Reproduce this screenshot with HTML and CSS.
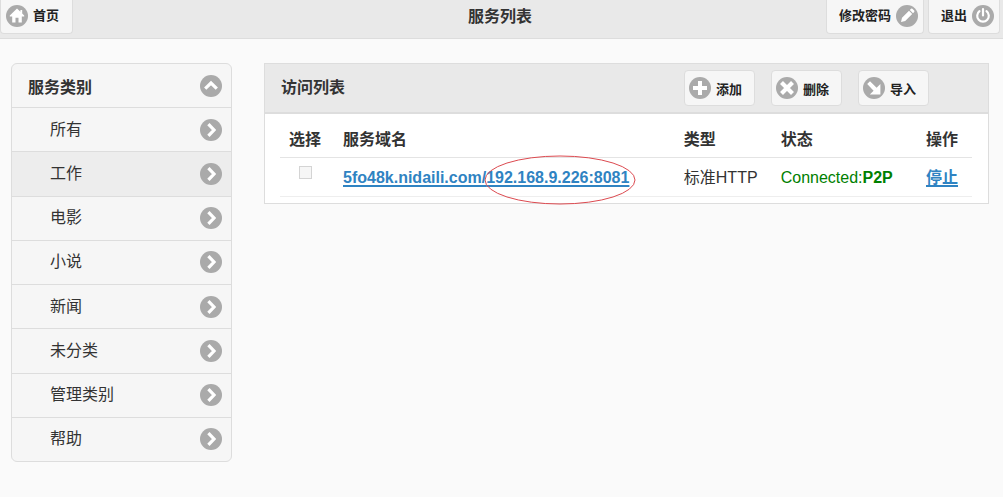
FILE: index.html
```html
<!DOCTYPE html>
<html lang="zh-CN">
<head>
  <meta charset="UTF-8">
  <meta name="viewport" content="width=device-width, initial-scale=1.0">
  <title>服务列表</title>
  <link rel="stylesheet" href="styles.css">
</head>
<body>

  <!-- Shared icons -->
  <svg class="icon-defs" aria-hidden="true">
    <symbol id="icon-home" viewBox="0 0 22 22">
      <path d="M11 3.6 3.8 10.6v1h2.4v5.8h3.3v-4.6h3v4.6h3.3v-5.8h2.4v-1l-2-2V5h-1.8v1.8z" fill="#fff"/>
    </symbol>
    <symbol id="icon-edit" viewBox="0 0 22 22">
      <path d="M5 17l1-4.2 7-7 3.2 3.2-7 7zM13.8 5l1.2-1.2q.7-.5 1.4 0l1.8 1.8q.5.7 0 1.4L17 8.2z" fill="#fff"/>
    </symbol>
    <symbol id="icon-power" viewBox="0 0 22 22">
      <path d="M7.5 6.2a5.8 5.8 0 1 0 7 0M11 4v6.5" fill="none" stroke="#fff" stroke-width="2.2" stroke-linecap="round"/>
    </symbol>
    <symbol id="icon-up" viewBox="0 0 22 22">
      <path d="M5.2 13.6 11 8l5.8 5.6" fill="none" stroke="#fff" stroke-width="3.2"/>
    </symbol>
    <symbol id="icon-right" viewBox="0 0 22 22">
      <path d="M8.4 5.2 14 11l-5.6 5.8" fill="none" stroke="#fff" stroke-width="3.2"/>
    </symbol>
    <symbol id="icon-plus" viewBox="0 0 22 22">
      <path d="M11 4v14M4 11h14" fill="none" stroke="#fff" stroke-width="4"/>
    </symbol>
    <symbol id="icon-delete" viewBox="0 0 22 22">
      <path d="M5.5 5.5l11 11M16.5 5.5l-11 11" fill="none" stroke="#fff" stroke-width="4.2"/>
    </symbol>
    <symbol id="icon-import" viewBox="0 0 22 22">
      <path d="M4.2 7 7 4.2l6.6 6.5L17.4 7v10.6H6.8l3.8-3.9z" fill="#fff"/>
    </symbol>
  </svg>

  <header class="header">
    <div class="header-side">
      <a class="btn btn-header" href="#"><svg class="icon"><use href="#icon-home"/></svg>首页</a>
    </div>
    <h1 class="title">服务列表</h1>
    <div class="header-side header-right">
      <a class="btn btn-header" href="#">修改密码<svg class="icon"><use href="#icon-edit"/></svg></a>
      <a class="btn btn-header" href="#">退出<svg class="icon"><use href="#icon-power"/></svg></a>
    </div>
  </header>

  <div class="content">
    <nav class="sidebar">
      <button type="button" class="sidebar-heading">服务类别<svg class="icon"><use href="#icon-up"/></svg></button>
      <ul class="category-list">
        <li><a href="#">所有<svg class="icon"><use href="#icon-right"/></svg></a></li>
        <li><a href="#" class="active">工作<svg class="icon"><use href="#icon-right"/></svg></a></li>
        <li><a href="#">电影<svg class="icon"><use href="#icon-right"/></svg></a></li>
        <li><a href="#">小说<svg class="icon"><use href="#icon-right"/></svg></a></li>
        <li><a href="#">新闻<svg class="icon"><use href="#icon-right"/></svg></a></li>
        <li><a href="#">未分类<svg class="icon"><use href="#icon-right"/></svg></a></li>
        <li><a href="#">管理类别<svg class="icon"><use href="#icon-right"/></svg></a></li>
        <li><a href="#">帮助<svg class="icon"><use href="#icon-right"/></svg></a></li>
      </ul>
    </nav>

    <main class="panel">
      <div class="panel-header">
        <h2>访问列表</h2>
        <div class="toolbar">
          <button type="button" class="btn"><svg class="icon"><use href="#icon-plus"/></svg>添加</button>
          <button type="button" class="btn"><svg class="icon"><use href="#icon-delete"/></svg>删除</button>
          <button type="button" class="btn"><svg class="icon"><use href="#icon-import"/></svg>导入</button>
        </div>
      </div>

      <div class="panel-body">
        <table class="service-table">
          <thead>
            <tr>
              <th class="col-select">选择</th>
              <th class="col-domain">服务域名</th>
              <th class="col-type">类型</th>
              <th class="col-status">状态</th>
              <th class="col-action">操作</th>
            </tr>
          </thead>
          <tbody>
            <tr>
              <td class="col-select"><input type="checkbox" class="check" id="service1" aria-labelledby="serviceName1"></td>
              <td><a class="domain" id="serviceName1" href="#">5fo48k.nidaili.com/<span class="marked">192.168.9.226:8081<svg class="mark" viewBox="0 0 152 50" aria-hidden="true"><ellipse cx="76" cy="25" rx="75" ry="24"/></svg></span></a></td>
              <td>标准HTTP</td>
              <td class="status">Connected:<b>P2P</b></td>
              <td><a class="stop" href="#">停止</a></td>
            </tr>
          </tbody>
        </table>
      </div>
    </main>
  </div>

</body>
</html>
```
FILE: styles.css
```css
* {
  box-sizing: border-box;
}
body {
  margin: 0;
  background-color: #fafafa;
  color: #333;
  font-family: "Liberation Sans", "Noto Sans CJK SC", sans-serif;
  font-size: 16px;
  line-height: 20px;
}
a {
  color: #333;
  text-decoration: none;
}
.icon-defs {
  display: none;
}
.icon {
  flex: none;
  width: 22px;
  height: 22px;
  border-radius: 50%;
  background-color: #aaa;
}

/* Buttons */
.btn {
  display: flex;
  align-items: center;
  gap: 5px;
  height: 36px;
  padding: 0 12px 0 4px;
  border: 1px solid #ddd;
  border-radius: 4px;
  background-color: #f6f6f6;
  color: #222;
  font-family: inherit;
  font-size: 13px;
  font-weight: bold;
  white-space: nowrap;
  cursor: pointer;
}
.btn-header {
  height: 34px;
  padding: 0 13px 2px 5px;
  border-top: none;
  border-radius: 0 0 4px 4px;
}
.header-right .btn-header {
  padding: 0 5px 2px 12px;
}

/* Header */
.header {
  display: flex;
  align-items: flex-start;
  height: 39px;
  padding-right: 3px;
  border-bottom: 1px solid #ddd;
  background-color: #e9e9e9;
}
.header-side {
  display: flex;
  flex: 1;
  gap: 4px;
}
.header-right {
  justify-content: flex-end;
}
.title {
  margin: 0;
  font-size: 16px;
  line-height: 34px;
}

.content {
  display: flex;
  align-items: flex-start;
  gap: 32px;
  padding: 24px 14px 24px 11px;
}

/* Sidebar */
.sidebar {
  flex: none;
  width: 22%;
  min-width: 221px;
  border: 1px solid #ddd;
  border-radius: 6px;
  overflow: hidden;
  background-color: #f6f6f6;
}
.sidebar-heading {
  display: flex;
  align-items: center;
  justify-content: space-between;
  width: 100%;
  height: 43px;
  padding: 0 9px 0 16px;
  border: none;
  background: none;
  color: #333;
  font-family: inherit;
  font-size: 16px;
  font-weight: bold;
}
.category-list {
  display: grid;
  grid-auto-rows: 1fr;
  min-height: 354px;
  margin: 0;
  padding: 0;
  list-style: none;
}
.category-list a {
  display: flex;
  align-items: center;
  justify-content: space-between;
  height: 100%;
  padding: 0 9px 0 38px;
  border-top: 1px solid #ddd;
  line-height: 22px;
}
.category-list .active {
  background-color: #ededed;
}

/* Panel */
.panel {
  flex: 1;
  min-width: 0;
  border: 1px solid #ddd;
  background-color: #fff;
}
.panel-header {
  display: flex;
  align-items: center;
  justify-content: space-between;
  height: 50px;
  padding: 0 59px 0 16px;
  border-bottom: 2px solid #ddd;
  background-color: #e9e9e9;
}
.panel-header h2 {
  margin: 0;
  font-size: 16px;
  line-height: 22px;
}
.toolbar {
  display: flex;
  gap: 16px;
}
.panel-body {
  padding: 7px 16px 6px 15px;
}

/* Table */
.service-table {
  width: 100%;
  border-collapse: collapse;
  table-layout: fixed;
}
.service-table th,
.service-table td {
  padding: 9px 0 7px 13px;
  border-bottom: 1px solid #e4e4e4;
  text-align: left;
  white-space: nowrap;
}
.service-table td {
  padding: 10px 0 8px 13px;
  border-bottom-color: #eee;
}
.service-table .col-select {
  width: 50px;
  padding-left: 0;
  text-align: center;
}
.service-table td.col-select {
  padding-top: 8px;
  vertical-align: top;
}
.col-type {
  width: 14%;
}
.col-status {
  width: 21%;
}
.col-action {
  width: 59px;
}
.check {
  appearance: none;
  display: block;
  width: 13px;
  height: 13px;
  margin: 0 auto;
  border: 1px solid #d4d4d4;
  background-color: #f6f6f6;
}
.check:checked {
  background-color: #38c;
}
.domain,
.stop {
  color: #2f83c2;
  font-weight: bold;
  text-decoration: underline;
  text-decoration-thickness: 2px;
  text-underline-offset: 2px;
}
.marked {
  position: relative;
}
.mark {
  position: absolute;
  top: -14px;
  left: -2px;
  width: 152px;
  height: 50px;
  pointer-events: none;
}
.mark ellipse {
  fill: none;
  stroke: #dc4a50;
  stroke-width: 1;
}
.status {
  color: #008000;
}
```
